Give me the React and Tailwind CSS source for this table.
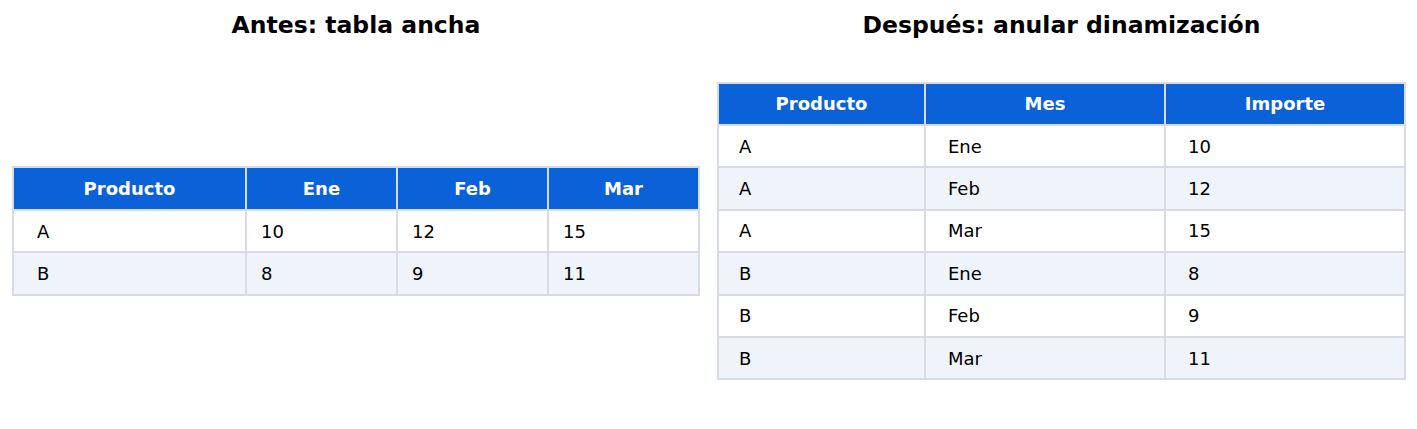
import React from "react";

const WIDE = {
  cols: "grid-cols-[231px_149px_149px_149px]",
  pads: ["pl-[23px]", "pl-[14px]", "pl-[14px]", "pl-[14px]"],
  rowH: "h-[40.6px]",
  head: ["Producto", "Ene", "Feb", "Mar"],
  rows: [
    ["A", "10", "12", "15"],
    ["B", "8", "9", "11"],
  ],
};

const LONG = {
  cols: "grid-cols-[205px_238px_238px]",
  pads: ["pl-[20px]", "pl-[22px]", "pl-[22px]"],
  rowH: "h-[40.4px]",
  head: ["Producto", "Mes", "Importe"],
  rows: [
    ["A", "Ene", "10"],
    ["A", "Feb", "12"],
    ["A", "Mar", "15"],
    ["B", "Ene", "8"],
    ["B", "Feb", "9"],
    ["B", "Mar", "11"],
  ],
};

function Table({ t }) {
  return (
    <div className={`grid ${t.cols} gap-[2px] p-[2px] bg-[#d6dbe5]`}>
      {t.head.map((h) => (
        <div
          key={h}
          className={`${t.rowH} flex items-center justify-center bg-[#0b62d8] text-white font-bold`}
        >
          {h}
        </div>
      ))}
      {t.rows.map((r, i) =>
        r.map((c, j) => (
          <div
            key={i + "-" + j}
            className={`${t.rowH} ${t.pads[j]} flex items-center text-black ${
              i % 2 ? "bg-[#eff3fa]" : "bg-white"
            }`}
          >
            {c}
          </div>
        ))
      )}
    </div>
  );
}

function Panel({ title, t }) {
  return (
    <div className="flex flex-col items-center">
      <div className="h-[47px] pt-[4px] flex items-center justify-center text-[23.5px] font-bold text-black">
        {title}
      </div>
      <div className="h-[368px] flex items-center">
        <Table t={t} />
      </div>
    </div>
  );
}

export default function App() {
  return (
    <div
      className="w-[1417px] h-[429px] bg-white flex pl-[12px] gap-[17px] text-[18px]"
      style={{ fontFamily: '"DejaVu Sans", sans-serif' }}
    >
      <Panel title="Antes: tabla ancha" t={WIDE} />
      <Panel title="Después: anular dinamización" t={LONG} />
    </div>
  );
}
